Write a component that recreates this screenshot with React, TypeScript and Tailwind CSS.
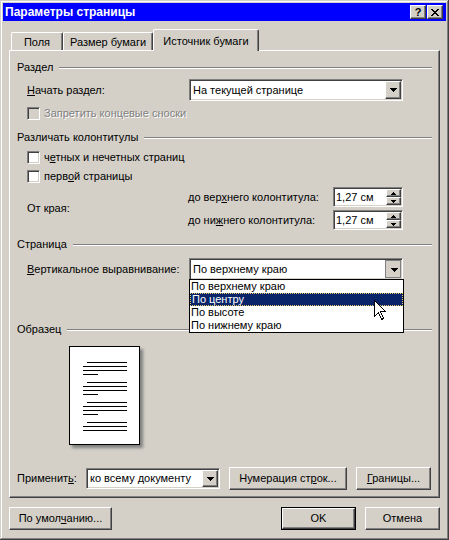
import React from "react";

const RAISED =
  "bg-[#d4d0c8] border border-t-white border-l-white border-r-[#404040] border-b-[#404040] shadow-[inset_-1px_-1px_#808080]";
const SUNKEN =
  "border border-t-[#808080] border-l-[#808080] border-r-white border-b-white shadow-[inset_1px_1px_#404040,inset_-1px_-1px_#d4d0c8]";

function Arrow({ up = false, size = 7 }: { up?: boolean; size?: number }) {
  const rows = Math.ceil(size / 2);
  const rects: React.ReactNode[] = [];
  for (let i = 0; i < rows; i++) {
    const w = size - 2 * i;
    const y = up ? rows - 1 - i : i;
    rects.push(<rect key={i} x={i} y={y} width={w} height={1} fill="#000" />);
  }
  return (
    <svg width={size} height={rows} shapeRendering="crispEdges" className="block">
      {rects}
    </svg>
  );
}

function Select({
  value,
  className,
  pressed = false,
  children,
}: {
  value: string;
  className: string;
  pressed?: boolean;
  children?: React.ReactNode;
}) {
  return (
    <div className={`relative ${SUNKEN} bg-white flex items-stretch p-px ${className}`}>
      <span className="flex-1 pl-[2px] flex items-center whitespace-nowrap overflow-hidden">{value}</span>
      {pressed ? (
        <div className="w-[16px] border border-[#808080] bg-[#d4d0c8] flex items-center justify-center pt-[2px] pl-[2px]">
          <Arrow />
        </div>
      ) : (
        <div className={`${RAISED} w-[16px] flex items-center justify-center`}>
          <Arrow />
        </div>
      )}
      {children}
    </div>
  );
}

function Spin() {
  return (
    <div className={`${SUNKEN} bg-white w-[70px] h-[20px] p-px flex`}>
      <span className="flex-1 pl-[1px] flex items-center">1,27 см</span>
      <div className="flex flex-col w-[15px]">
        <div className={`${RAISED} h-[8px] flex items-center justify-center`}>
          <Arrow up size={5} />
        </div>
        <div className={`${RAISED} h-[8px] flex items-center justify-center`}>
          <Arrow size={5} />
        </div>
      </div>
    </div>
  );
}

function Check({ disabled = false }: { disabled?: boolean }) {
  return (
    <span
      className={`${SUNKEN} w-[13px] h-[13px] shrink-0 ${disabled ? "bg-[#d4d0c8]" : "bg-white"}`}
    />
  );
}

function Group({ title }: { title: string }) {
  return (
    <div className="flex items-center h-[13px]">
      <span className="whitespace-nowrap">{title}</span>
      <div className="flex-1 ml-[6px] border-t border-t-[#808080] border-b border-b-white" />
    </div>
  );
}

function Btn({
  children,
  className,
  isDefault = false,
}: {
  children: React.ReactNode;
  className: string;
  isDefault?: boolean;
}) {
  if (isDefault) {
    return (
      <div className={`border border-black flex ${className}`}>
        <div className={`${RAISED} flex-1 flex items-center justify-center`}>{children}</div>
      </div>
    );
  }
  return <div className={`${RAISED} flex items-center justify-center ${className}`}>{children}</div>;
}

function Preview() {
  const full = 44;
  const lines: { y: number; x: number; w: number }[] = [];
  const groups = [16, 36, 56];
  groups.forEach((g) => {
    lines.push({ y: g, x: 18, w: 40 });
    lines.push({ y: g + 4, x: 14, w: full });
    lines.push({ y: g + 8, x: 14, w: full });
    lines.push({ y: g + 12, x: 14, w: 15 });
  });
  lines.push({ y: 76, x: 18, w: 40 });
  lines.push({ y: 80, x: 14, w: full });
  lines.push({ y: 84, x: 14, w: full });
  return (
    <div className="ml-[52px] mt-[10px] w-[71px] h-[99px] bg-white border border-black shadow-[3px_3px_3px_#808080]">
      <svg width="69" height="97" shapeRendering="crispEdges" className="block">
        {lines.map((l, i) => (
          <rect key={i} x={l.x - 1} y={l.y - 1} width={l.w} height={1} fill="#000" />
        ))}
      </svg>
    </div>
  );
}

function Cursor() {
  return (
    <svg
      width="13"
      height="21"
      viewBox="0 0 13 21"
      className="absolute left-[184px] top-[20px] z-20"
      shapeRendering="crispEdges"
    >
      <path
        d="M0.5 0.5 L0.5 16.5 L4.5 12.5 L7.5 19.5 L9.5 18.5 L6.5 11.5 L11.5 11.5 Z"
        fill="#fff"
        stroke="#000"
        strokeWidth="1"
      />
    </svg>
  );
}

export default function App() {
  return (
    <div className="w-[449px] h-[540px] bg-[#d4d0c8] p-[3px] flex flex-col font-['Liberation_Sans',Arial,sans-serif] text-[11px] leading-[13px] text-black shadow-[inset_-1px_-1px_#404040,inset_1px_1px_#d4d0c8,inset_-2px_-2px_#808080,inset_2px_2px_#ffffff] select-none">
      {/* Title bar */}
      <div className="h-[18px] bg-[#0000fe] flex items-center pl-[2px] pr-[3px]">
        <span className="text-white font-bold text-[12px] flex-1">Параметры страницы</span>
        <div className="flex gap-[1px]">
          <div className={`${RAISED} w-[16px] h-[14px] flex items-center justify-center font-bold text-[11px] leading-[11px]`}>
            ?
          </div>
          <div className={`${RAISED} w-[16px] h-[14px] flex items-center justify-center`}>
            <svg width="8" height="7" viewBox="0 0 8 7" shapeRendering="crispEdges" className="block">
              <path d="M0 0h2v1h-2zM6 0h2v1h-2zM1 1h2v1h-2zM5 1h2v1h-2zM2 2h4v1h-4zM3 3h2v1h-2zM2 4h4v1h-4zM1 5h2v1h-2zM5 5h2v1h-2zM0 6h2v1h-2zM6 6h2v1h-2z" fill="#000" />
            </svg>
          </div>
        </div>
      </div>

      <div className="px-[6px] flex flex-col">
        {/* Tabs */}
        <div className="mt-[8px] h-[21px] flex items-end pl-[2px]">
          <div className="h-[18px] w-[52px] border-t border-l border-t-white border-l-white border-r border-r-[#404040] shadow-[inset_-1px_0_#808080] rounded-tl-[2px] rounded-tr-[2px] flex items-center justify-center pt-[1px]">
            Поля
          </div>
          <div className="h-[18px] w-[90px] border-t border-l border-t-white border-l-white border-r border-r-[#404040] shadow-[inset_-1px_0_#808080] rounded-tl-[2px] rounded-tr-[2px] flex items-center justify-center pt-[1px]">
            Размер бумаги
          </div>
          <div className="relative z-10 -mb-px h-[22px] w-[106px] bg-[#d4d0c8] border-t border-l border-t-white border-l-white border-r border-r-[#404040] shadow-[inset_-1px_0_#808080] rounded-tl-[2px] rounded-tr-[2px] flex items-center justify-center pt-[1px]">
            Источник бумаги
          </div>
        </div>

        {/* Panel */}
        <div className="h-[448px] w-[431px] border border-t-white border-l-white border-r-[#404040] border-b-[#404040] shadow-[inset_-1px_-1px_#808080] px-[7px] flex flex-col">
          <div className="mt-[10px]">
            <Group title="Раздел" />
          </div>
          <div className="mt-[5px] flex items-center">
            <span className="ml-[10px] w-[162px]">
              <u>Н</u>ачать раздел:
            </span>
            <Select value="На текущей странице" className="w-[214px] h-[22px]" />
          </div>
          <div className="mt-[6px] ml-[10px] flex items-center gap-[4px] h-[13px]">
            <Check disabled />
            <span className="text-[#808080] [text-shadow:1px_1px_0_#ffffff]">Запретить концевые сноски</span>
          </div>

          <div className="mt-[11px]">
            <Group title="Различать колонтитулы" />
          </div>
          <div className="mt-[7px] ml-[10px] flex items-center gap-[4px] h-[13px]">
            <Check />
            <span>
              ч<u>е</u>тных и нечетных страниц
            </span>
          </div>
          <div className="mt-[6px] ml-[10px] flex items-center gap-[4px] h-[13px]">
            <Check />
            <span>
              перв<u>о</u>й страницы
            </span>
          </div>
          <div className="mt-[4px] flex items-center">
            <span className="ml-[10px] w-[161px]">От края:</span>
            <div className="flex flex-col gap-[3px]">
              <div className="flex items-center">
                <span className="w-[145px]">
                  до вер<u>х</u>него колонтитула:
                </span>
                <Spin />
              </div>
              <div className="flex items-center">
                <span className="w-[145px]">
                  до ни<u>ж</u>него колонтитула:
                </span>
                <Spin />
              </div>
            </div>
          </div>

          <div className="mt-[8px]">
            <Group title="Страница" />
          </div>
          <div className="mt-[7px] flex items-center relative z-10">
            <span className="ml-[10px] w-[162px]">
              <u>В</u>ертикальное выравнивание:
            </span>
            <Select value="По верхнему краю" className="w-[214px] h-[22px]" pressed>
              <div className="absolute left-[-1px] top-[20px] w-[215px] border border-black bg-white flex flex-col">
                <div className="h-[13px] pl-[1px] flex items-center">По верхнему краю</div>
                <div className="h-[13px] pl-[1px] flex items-center bg-[#0a246a] text-white border border-dotted border-[#e8c860]">
                  По центру
                </div>
                <div className="h-[13px] pl-[1px] flex items-center">По высоте</div>
                <div className="h-[13px] pl-[1px] flex items-center">По нижнему краю</div>
                <Cursor />
              </div>
            </Select>
          </div>

          <div className="mt-[43px]">
            <Group title="Образец" />
          </div>
          <Preview />

          <div className="mt-[22px] flex items-center">
            <span className="w-[69px]">
              Применит<u>ь</u>:
            </span>
            <Select value="ко всему документу" className="w-[134px] h-[21px]" />
            <Btn className="ml-[9px] w-[118px] h-[23px]">
              <span>
                Нумерация ст<u>р</u>ок...
              </span>
            </Btn>
            <Btn className="ml-[9px] w-[75px] h-[23px]">
              <span>
                <u>Г</u>раницы...
              </span>
            </Btn>
          </div>
        </div>

        {/* Dialog buttons */}
        <div className="mt-[9px] flex items-center">
          <Btn className="w-[103px] h-[23px]">
            <span>
              По умол<u>ч</u>анию...
            </span>
          </Btn>
          <div className="flex-1" />
          <Btn className="w-[75px] h-[23px]" isDefault>
            <span>OK</span>
          </Btn>
          <Btn className="ml-[9px] w-[75px] h-[23px]">
            <span>Отмена</span>
          </Btn>
        </div>
      </div>
    </div>
  );
}
